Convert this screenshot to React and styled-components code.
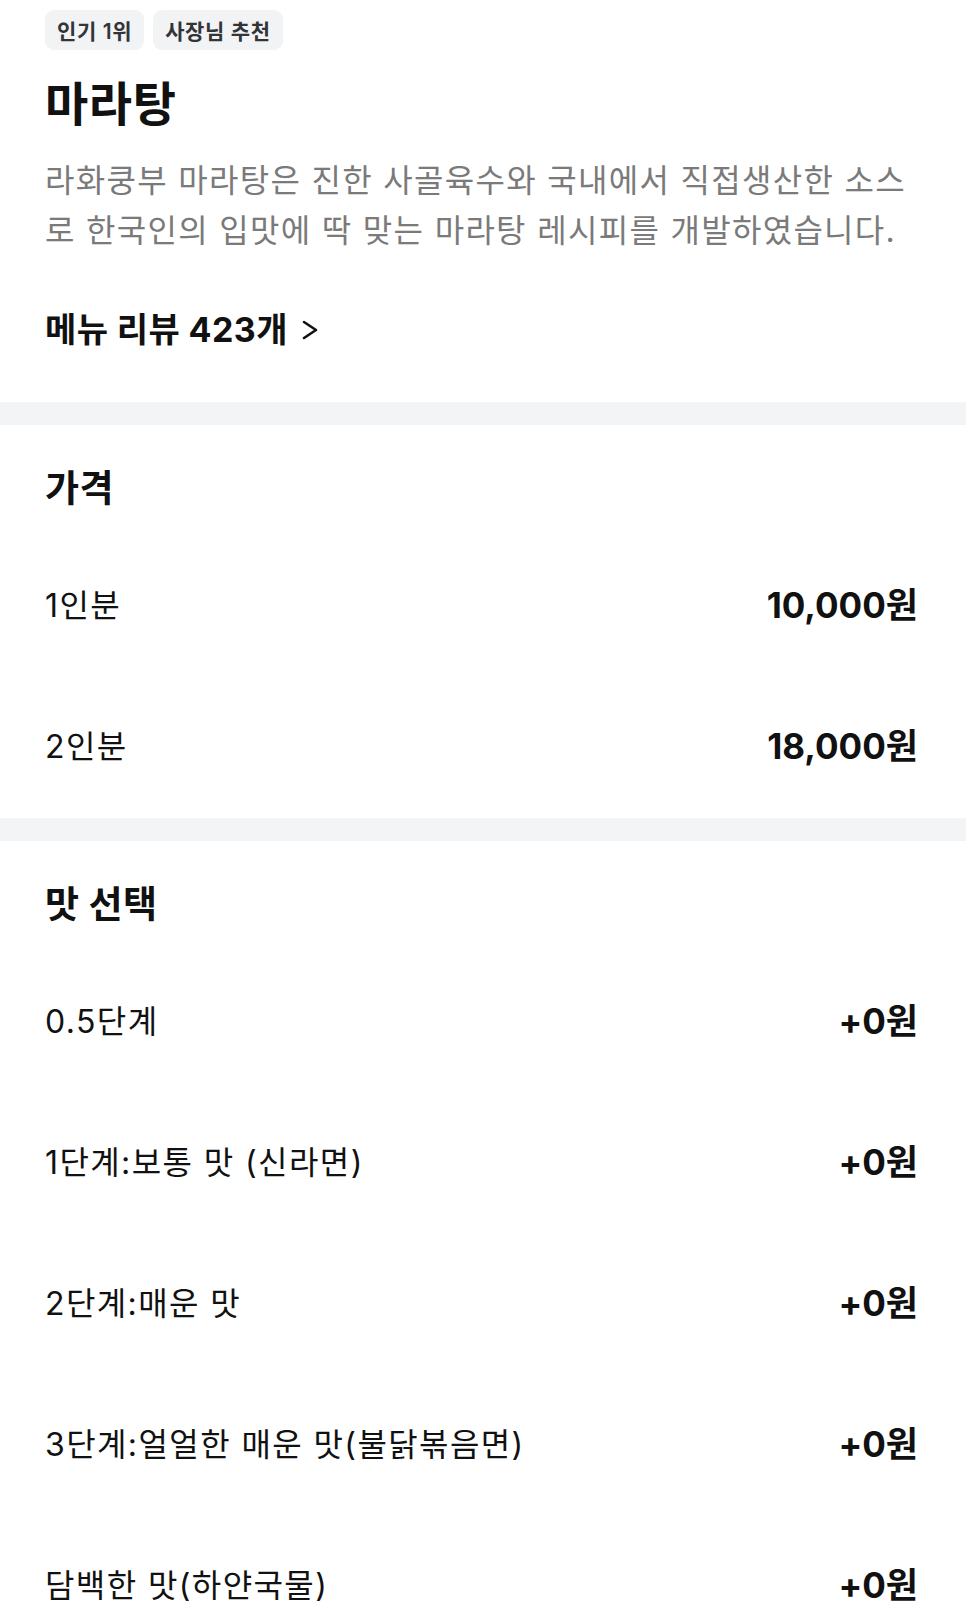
import React from "react";
import styled, { createGlobalStyle } from "styled-components";

const GlobalStyle = createGlobalStyle`
  html, body {
    margin: 0;
    padding: 0;
    background: #ffffff;
  }
  body {
    font-family: Inter, "Noto Sans CJK KR", "Noto Sans", sans-serif;
    color: #111111;
    -webkit-font-smoothing: antialiased;
  }
  * { box-sizing: border-box; }
`;

const Page = styled.main`
  width: 966px;
  background: #ffffff;
`;

const Intro = styled.section`
  padding: 10px 45px 49px;
  display: flex;
  flex-direction: column;
`;

const BadgeRow = styled.div`
  display: flex;
  gap: 9px;
`;

const Badge = styled.span`
  display: inline-flex;
  align-items: center;
  height: 40px;
  padding: 0 12px;
  border-radius: 9px;
  background: #f2f3f5;
  color: #333438;
  font-size: 21px;
  font-weight: 600;
  letter-spacing: 0.6px;
`;

const Title = styled.h1`
  margin: 26px 0 0;
  font-size: 47px;
  line-height: 56px;
  font-weight: 700;
  color: #111111;
  letter-spacing: 0.6px;
`;

const Description = styled.p`
  margin: 24px 0 0;
  font-size: 32px;
  line-height: 50px;
  font-weight: 400;
  color: #7a7a7a;
  word-break: break-all;
  letter-spacing: 1.3px;
`;

const ReviewLink = styled.a`
  margin-top: 51px;
  display: inline-flex;
  align-items: center;
  align-self: flex-start;
  gap: 14px;
  font-size: 34px;
  line-height: 46px;
  font-weight: 700;
  color: #111111;
  text-decoration: none;
  letter-spacing: 0.4px;
`;

const Divider = styled.div`
  height: 23px;
  background: #f3f4f6;
`;

const OptionSection = styled.section`
  padding: 40px 45px 4px;
`;

const SectionTitle = styled.h2`
  margin: 0 0 19px;
  font-size: 37px;
  line-height: 48px;
  font-weight: 700;
  color: #111111;
  letter-spacing: 0.4px;
`;

const OptionRow = styled.div`
  height: 141px;
  display: flex;
  align-items: center;
  justify-content: space-between;
`;

const OptionLabel = styled.span`
  font-size: 32px;
  font-weight: 400;
  color: #111111;
  letter-spacing: 1.4px;
`;

const OptionPrice = styled.span`
  font-size: 35px;
  font-weight: 700;
  color: #111111;
  letter-spacing: 0px;
  margin-right: 3px;
`;

const Chevron = () => (
  <svg width="16" height="20" viewBox="0 0 16 20" fill="none">
    <polyline
      points="2,2 14,10 2,18"
      stroke="#111111"
      strokeWidth="2.6"
      strokeLinecap="round"
      strokeLinejoin="round"
    />
  </svg>
);

const prices = [
  { label: "1인분", price: "10,000원" },
  { label: "2인분", price: "18,000원" },
];

const flavors = [
  { label: "0.5단계", price: "+0원" },
  { label: "1단계:보통 맛 (신라면)", price: "+0원" },
  { label: "2단계:매운 맛", price: "+0원" },
  { label: "3단계:얼얼한 매운 맛(불닭볶음면)", price: "+0원" },
  { label: "담백한 맛(하얀국물)", price: "+0원" },
];

export default function App() {
  return (
    <>
      <GlobalStyle />
      <Page>
        <Intro>
          <BadgeRow>
            <Badge>인기 1위</Badge>
            <Badge>사장님 추천</Badge>
          </BadgeRow>
          <Title>마라탕</Title>
          <Description>
            라화쿵부 마라탕은 진한 사골육수와 국내에서 직접생산한 소스로 한국인의 입맛에 딱 맞는 마라탕 레시피를 개발하였습니다.
          </Description>
          <ReviewLink href="#">
            메뉴 리뷰 423개
            <Chevron />
          </ReviewLink>
        </Intro>
        <Divider />
        <OptionSection>
          <SectionTitle>가격</SectionTitle>
          {prices.map((p) => (
            <OptionRow key={p.label}>
              <OptionLabel>{p.label}</OptionLabel>
              <OptionPrice>{p.price}</OptionPrice>
            </OptionRow>
          ))}
        </OptionSection>
        <Divider />
        <OptionSection>
          <SectionTitle>맛 선택</SectionTitle>
          {flavors.map((f) => (
            <OptionRow key={f.label}>
              <OptionLabel>{f.label}</OptionLabel>
              <OptionPrice>{f.price}</OptionPrice>
            </OptionRow>
          ))}
        </OptionSection>
      </Page>
    </>
  );
}
